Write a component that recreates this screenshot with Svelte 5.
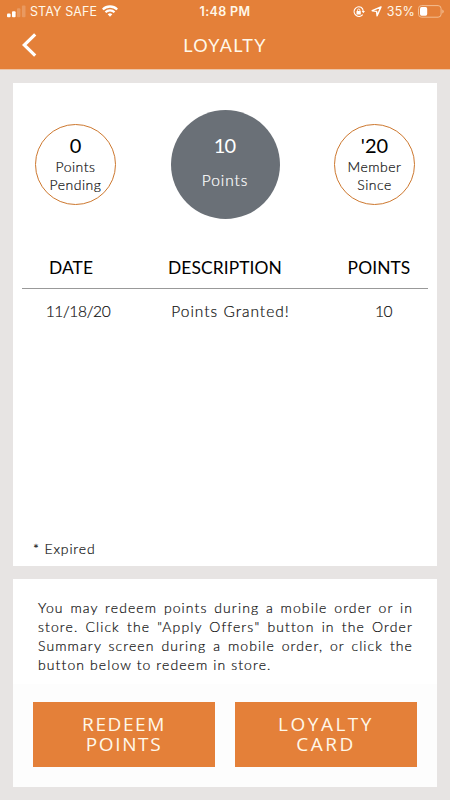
<script>
  const rows = [{ date: '11/18/20', description: 'Points Granted!', points: 10 }];
</script>

<main class="screen">
  <header>
    <div class="status">
      <div class="carrier">
        <svg class="signal" width="19" height="13" viewBox="0 0 19 13" fill="#fff">
          <rect x="0" y="8.6" width="3.6" height="3.6" rx="1" />
          <rect x="5" y="6.2" width="3.6" height="6" rx="1" />
          <rect x="10" y="3.2" width="3.4" height="9" rx="1" opacity=".2" />
          <rect x="14.9" y="0.4" width="3.6" height="11.8" rx="1" opacity=".2" />
        </svg>
        <span class="network">STAY SAFE</span>
        <svg class="wifi" width="16" height="12" viewBox="0 0 16 12" fill="none" stroke="#fff" stroke-width="2.3">
          <path d="M.8 4.5a10.2 10.2 0 0 1 14.4 0" />
          <path d="M3.5 7.3a6.4 6.4 0 0 1 9 0" />
          <path d="M8 11.7L5.7 9.3a3.3 3.3 0 0 1 4.6 0z" fill="#fff" stroke="none" />
        </svg>
      </div>
      <span class="time">1:48 PM</span>
      <div class="power">
        <svg class="lock" width="12" height="12" viewBox="0 0 12 12" fill="none" stroke="#fff">
          <path d="M8.1 1.3A4.8 4.8 0 1 0 9.7 8.6M8.1 1.3A4.8 4.8 0 0 1 10.2 5" stroke-width="1.1" />
          <path d="M8.6 5h3.4l-1.7 2.3z" fill="#fff" stroke="none" />
          <rect x="3.5" y="5.1" width="4.3" height="3.3" rx=".5" fill="#fff" stroke="none" />
          <path d="M4.5 5.3V4.2a1.2 1.2 0 0 1 2.4 0v1.1" stroke-width=".9" />
        </svg>
        <svg class="arrow" width="11" height="11" viewBox="0 0 11 11" fill="none" stroke="#fff" stroke-width="1.4" stroke-linejoin="round">
          <path d="M10 .9L1.2 4.7l4.4.7.5 4.4z" />
        </svg>
        <span class="percent">35%</span>
        <svg class="battery" width="26" height="13" viewBox="0 0 26 13">
          <rect x=".5" y=".6" width="22.6" height="11.6" rx="3" fill="none" stroke="#f2bd92" />
          <rect x="2" y="2.1" width="7.2" height="8.6" rx="1.6" fill="#fff" />
          <path d="M24.3 4.4v4q1.4-.4 1.4-2t-1.4-2z" fill="#f2bd92" />
        </svg>
      </div>
    </div>
    <div class="nav">
      <svg class="back" width="15" height="24" viewBox="0 0 15 24" fill="none" stroke="#fff" stroke-width="3.2">
        <path d="M13.2 1.4L2.2 12l11 10.6" />
      </svg>
      <h1>LOYALTY</h1>
    </div>
  </header>

  <section class="card history">
    <div class="stats">
      <div class="circle small">
        <strong>0</strong>
        <span>Points</span>
        <span>Pending</span>
      </div>
      <div class="circle big">
        <strong>10</strong>
        <span>Points</span>
      </div>
      <div class="circle small">
        <strong>'20</strong>
        <span>Member</span>
        <span>Since</span>
      </div>
    </div>

    <div class="table">
      <div class="row head">
        <span class="date">DATE</span>
        <span class="desc">DESCRIPTION</span>
        <span class="pts">POINTS</span>
      </div>
      {#each rows as row}
        <div class="row entry">
          <span class="date">{row.date}</span>
          <span class="desc">{row.description}</span>
          <span class="pts">{row.points}</span>
        </div>
      {/each}
    </div>

    <p class="expired">* Expired</p>
  </section>

  <section class="card redeem">
    <p>
      You may redeem points during a mobile order or in store. Click the "Apply Offers" button in
      the Order Summary screen during a mobile order, or click the button below to redeem in store.
    </p>
    <div class="actions">
      <button class="points">REDEEM<br />POINTS</button>
      <button class="loyalty">LOYALTY<br />CARD</button>
    </div>
  </section>
</main>

<style>
  :global(body) { margin: 0; background: #e7e4e3; }
  .screen {
    width: 450px;
    height: 800px;
    overflow: hidden;
    background: #e7e4e3;
    font-family: Lato, "Liberation Sans", sans-serif;
    color: #111;
  }
  header {
    box-sizing: border-box;
    height: 70px;
    background: #e48039;
    border-bottom: 1px solid #edc5a7;
    color: #fff8ea;
  }
  .status {
    height: 23px;
    display: grid;
    grid-template-columns: 1fr auto 1fr;
    align-items: center;
    font: 12.5px/23px Inter, sans-serif;
  }
  .carrier, .power { display: flex; align-items: center; }
  .carrier { padding-left: 7px; }
  .signal { margin-top: -1px; }
  .network { margin-left: 4px; letter-spacing: .1px; }
  .wifi { margin-left: 5px; margin-top: -2px; }
  .time { font-weight: 600; letter-spacing: .35px; }
  .power { justify-content: flex-end; padding-right: 6px; }
  .lock { margin-right: 2px; }
  .arrow { margin-left: 4px; }
  .percent { margin-left: 5px; letter-spacing: .2px; }
  .battery { margin-left: 3px; }
  .nav {
    height: 46px;
    display: grid;
    grid-template-columns: 50px 1fr 50px;
    align-items: center;
  }
  .back { margin-left: 22px; margin-top: -2px; }
  h1 {
    margin: 0;
    text-align: center;
    font-size: 18px;
    font-weight: 400;
    letter-spacing: 1.4px;
    line-height: 44px;
    padding-bottom: 2px;
  }
  .card { width: 424px; margin: 0 auto; background: #fff; box-sizing: border-box; }
  .history { height: 483px; margin-top: 13px; display: flex; flex-direction: column; }
  .stats {
    display: flex;
    justify-content: space-between;
    align-items: center;
    height: 109px;
    padding: 27px 22px 0;
  }
  .circle {
    box-sizing: border-box;
    border-radius: 50%;
    display: flex;
    flex-direction: column;
    align-items: center;
    font-size: 14px;
    font-weight: 300;
    letter-spacing: .5px;
    line-height: 18px;
    color: #111;
    -webkit-text-stroke: .2px;
  }
  .circle strong {
    font-size: 20px;
    font-weight: 400;
    letter-spacing: 0;
    color: #000;
    line-height: 24px;
    -webkit-text-stroke: 0;
  }
  .small { width: 81px; height: 81px; border: 1px solid #cd782f; padding-top: 8px; }
  .small strong { margin-bottom: 1px; }
  .big { width: 109px; height: 109px; background: #6a7077; color: #fff; padding-top: 23px; }
  .circle.big strong { color: #fff; letter-spacing: -.8px; margin-right: 1px; }
  .big span { margin-top: 14px; font-size: 15.5px; letter-spacing: .9px; }
  .table { margin: 38px 9px 0; }
  .row { display: grid; grid-template-columns: 98px 210px 98px; text-align: center; }
  .head {
    height: 31px;
    border-bottom: 1px solid #999;
    font-size: 17.4px;
    letter-spacing: .1px;
    line-height: 22px;
    color: #000;
  }
  .entry {
    margin-top: 11px;
    font-size: 15.5px;
    line-height: 22px;
    letter-spacing: 1px;
    font-weight: 300;
    -webkit-text-stroke: .2px;
  }
  .entry .date { padding-left: 14px; letter-spacing: -.35px; }
  .entry .desc { padding-left: 11px; }
  .entry .pts { padding-left: 9px; letter-spacing: -.6px; }
  .expired {
    margin: auto 20px 7px;
    font-size: 14px;
    font-weight: 300;
    line-height: 20px;
    letter-spacing: .85px;
    -webkit-text-stroke: .2px;
  }
  .redeem {
    height: 208px;
    margin-top: 13px;
    padding: 18.5px 20px 0;
    background: linear-gradient(#fff 105px, #fdfdfd 105px);
  }
  .redeem p {
    margin: 0 5px;
    width: 375px;
    font-size: 14px;
    font-weight: 300;
    line-height: 19.3px;
    letter-spacing: 1.1px;
    text-align: justify;
    -webkit-text-stroke: .2px;
  }
  .actions { display: flex; gap: 20px; margin-top: 27px; }
  button {
    width: 182px;
    height: 65px;
    padding: 0;
    border: 0;
    background: #e48039;
    color: #fff8ea;
    font: 19px/20px "Open Sans", sans-serif;
  }
  .points { letter-spacing: 1.6px; }
  .loyalty { letter-spacing: 2.5px; }
</style>
